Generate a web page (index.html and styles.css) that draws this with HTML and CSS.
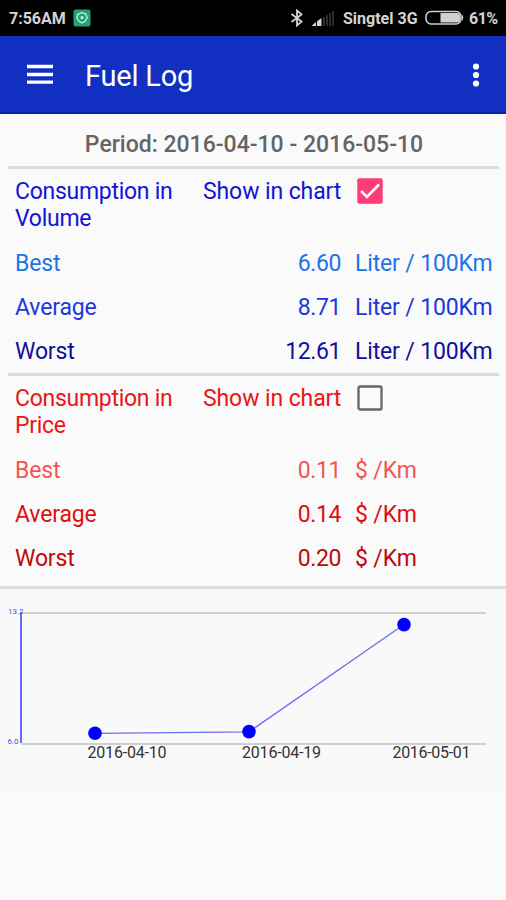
FILE: index.html
```html
<!DOCTYPE html>
<html lang="en">
<head>
    <meta charset="UTF-8">
    <meta name="viewport" content="width=device-width, initial-scale=1.0">
    <title>Fuel Log</title>
    <link rel="stylesheet" href="styles.css">
</head>
<body>

    <!-- Status bar -->
    <div class="status-bar">
        <span class="clock">7:56AM</span>
        <svg class="app-icon" width="18" height="18" viewBox="0 0 18 18">
            <rect x="0.5" y="0.5" width="17" height="17" rx="2" fill="#1fa374"/>
            <path d="M9 3.5l4 1.8 1.2 3.4-2 3.3L9 14l-3.2-2-2-3.3L5 5.3z" fill="none" stroke="#c5eedd" stroke-width="1.3"/>
            <circle cx="9" cy="8.6" r="1.6" fill="#c5eedd"/>
        </svg>
        <svg class="bluetooth" width="14" height="18" viewBox="0 0 14 18">
            <path d="M1.5 5l10 7.6L7 16.5v-15l4.5 3.9L1.500 13" fill="none" stroke="#d4d4d4" stroke-width="1.8"/>
        </svg>
        <svg class="signal" width="24" height="18" viewBox="0 0 24 18">
            <path d="M0.5 17L5 13v4zM6 17v-4.8L10.500 9v8z" fill="#d4d4d4"/>
            <path d="M13 17V8M16 17V6M19 17V4M22 17V2" stroke="#303030" stroke-width="1.8"/>
        </svg>
        <span class="carrier">Singtel 3G</span>
        <svg class="battery" width="40" height="16" viewBox="0 0 40 16">
            <rect x="1" y="1.5" width="35" height="12.5" rx="5" fill="none" stroke="#cfcfcf" stroke-width="1.6"/>
            <path d="M15.500 3H32q3 0 3 3v3.500q0 3-3 3H15.500z" fill="#cfcfcf"/>
            <path d="M37 4.500q2.500 3.200 0 6.500z" fill="#cfcfcf"/>
        </svg>
        <span class="percent">61%</span>
    </div>

    <!-- Toolbar -->
    <div class="toolbar">
        <svg class="menu-icon" width="28" height="22" viewBox="0 0 28 22">
            <path d="M1 2.5h26M1 10.500h26M1 18.200h26" stroke="#fff" stroke-width="3.3"/>
        </svg>
        <h1>Fuel Log</h1>
        <svg class="more-icon" width="8" height="26" viewBox="0 0 8 26">
            <circle cx="4" cy="4.5" r="3.1" fill="#fff"/>
            <circle cx="4" cy="13" r="3.1" fill="#fff"/>
            <circle cx="4" cy="21.5" r="3.1" fill="#fff"/>
        </svg>
    </div>

    <div class="container">
        <div class="period">Period: 2016-04-10 - 2016-05-10</div>

        <!-- Consumption in volume -->
        <div class="section volume">
            <div class="section-head">
                <span class="title">Consumption in Volume</span>
                <span class="show">Show in chart</span>
                <svg class="checkbox" width="26" height="26" viewBox="0 0 26 26">
                    <rect x="0.3" y="0.3" width="25.4" height="25.4" rx="2" fill="#ff3b78"/>
                    <path d="M4 13l6 6L22 6.5" fill="none" stroke="#fff" stroke-width="2.6"/>
                </svg>
            </div>
            <div class="row best"><span>Best</span><span class="value">6.60</span><span class="unit">Liter / 100Km</span></div>
            <div class="row average"><span>Average</span><span class="value">8.71</span><span class="unit">Liter / 100Km</span></div>
            <div class="row worst"><span>Worst</span><span class="value">12.61</span><span class="unit">Liter / 100Km</span></div>
        </div>

        <!-- Consumption in price -->
        <div class="section price">
            <div class="section-head">
                <span class="title">Consumption in Price</span>
                <span class="show">Show in chart</span>
                <svg class="checkbox" width="26" height="26" viewBox="0 0 26 26">
                    <rect x="1.5" y="1.5" width="23" height="23" rx="1.5" fill="none" stroke="#666" stroke-width="2.3"/>
                </svg>
            </div>
            <div class="row best"><span>Best</span><span class="value">0.11</span><span class="unit">$ /Km</span></div>
            <div class="row average"><span>Average</span><span class="value">0.14</span><span class="unit">$ /Km</span></div>
            <div class="row worst"><span>Worst</span><span class="value">0.20</span><span class="unit">$ /Km</span></div>
        </div>
    </div>

    <!-- Chart -->
    <div class="chart">
        <svg width="506" height="209" viewBox="0 0 506 209">
            <path class="grid-line" d="M21 24h465M21 155h465"/>
            <path class="axis" d="M21 23v131"/>
            <text class="axis-label" x="8" y="24.5">13.2</text>
            <text class="axis-label" x="7.5" y="155">6.0</text>
            <path class="line" d="M95 144.300l154-1.500L404 35.500"/>
            <circle class="point" cx="95" cy="144.3" r="6.8"/>
            <circle class="point" cx="249" cy="142.6" r="6.8"/>
            <circle class="point" cx="404" cy="35.6" r="6.8"/>
            <text class="date" x="87.5" y="169" textLength="79">2016-04-10</text>
            <text class="date" x="242" y="169" textLength="79">2016-04-19</text>
            <text class="date" x="392.5" y="169" textLength="78">2016-05-01</text>
        </svg>
    </div>

</body>
</html>
```
FILE: styles.css
```css
body {
    font-family: Roboto, "Liberation Sans", sans-serif;
    margin: 0;
    padding: 0;
    background-color: #fafafa;
    color: #333;
}
svg {
    display: block;
    flex-shrink: 0;
}
.status-bar {
    background-color: #000;
    color: #d4d4d4;
    display: flex;
    align-items: center;
    height: 36px;
    padding: 0 9px 0 9px;
    font-size: 16px;
    font-weight: bold;
    white-space: nowrap;
}
.clock {
    width: 64px;
}
.bluetooth {
    margin-left: auto;
}
.signal {
    margin-left: 7px;
}
.carrier {
    margin-left: 8px;
    width: 76px;
}
.battery {
    margin-left: 6px;
}
.percent {
    margin-left: 4px;
    width: 28px;
    letter-spacing: -0.5px;
}
.toolbar {
    background-color: #112fc0;
    border-bottom: 2px solid #0624a8;
    box-sizing: border-box;
    display: flex;
    align-items: center;
    height: 78px;
    padding: 2px 26px 0;
}
h1 {
    margin: 2px 0 0 31px;
    color: #fff;
    font-size: 29px;
    font-weight: normal;
    letter-spacing: -0.2px;
}
.more-icon {
    margin-left: auto;
}
.container {
    height: 475px;
    border-bottom: 3px solid #dcdcdc;
    box-sizing: border-box;
}
.period {
    height: 52px;
    line-height: 62px;
    padding-left: 2px;
    color: #646464;
    font-size: 23px;
    font-weight: 500;
    text-align: center;
}
.section {
    margin: 0 7px 0 8px;
    padding-left: 7px;
    border-top: 3px solid #dcdcdc;
    height: 204px;
    font-size: 23px;
    line-height: 27px;
    letter-spacing: -0.15px;
    white-space: nowrap;
}
.section-head {
    display: flex;
    height: 63px;
    padding-top: 9px;
}
.title {
    width: 165px;
    margin-right: 23px;
    white-space: normal;
    letter-spacing: -0.28px;
}
.show {
    width: 154px;
    letter-spacing: -0.1px;
}
.row {
    display: grid;
    grid-template-columns: 200px 126px 140px;
    align-items: center;
    height: 44.3px;
}
.value {
    text-align: right;
    letter-spacing: -0.4px;
}
.unit {
    margin-left: 14px;
}
.volume {
    color: #1414d6;
}
.volume .best {
    color: #1c74e8;
}
.volume .average {
    color: #1c38d8;
}
.volume .worst {
    color: #10109c;
}
.price {
    color: #ea1616;
}
.price .best {
    color: #f45454;
}
.price .average {
    color: #dc1010;
}
.price .worst {
    color: #bd0a0a;
}
.chart {
    background-color: #f9f9f9;
}
.grid-line {
    stroke: #d0d0d0;
    stroke-width: 2;
}
.axis {
    stroke: #6a6aff;
    stroke-width: 2;
}
.line {
    fill: none;
    stroke: #6c6cf4;
    stroke-width: 1.3;
}
.point {
    fill: #00f;
}
.axis-label {
    fill: #4a4af0;
    font-size: 8px;
}
.date {
    fill: #333;
    font-size: 16px;
}
```
